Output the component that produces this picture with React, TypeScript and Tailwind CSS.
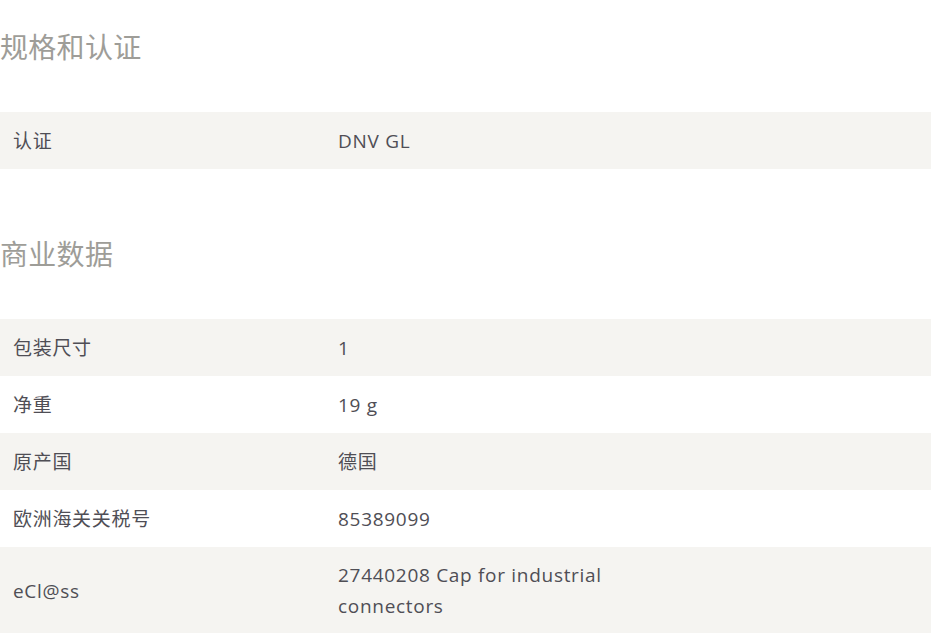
import React from "react";

interface Row {
  label: string;
  value: string;
}

const SECTIONS: { title: string; rows: Row[] }[] = [
  {
    title: "规格和认证",
    rows: [{ label: "认证", value: "DNV GL" }],
  },
  {
    title: "商业数据",
    rows: [
      { label: "包装尺寸", value: "1" },
      { label: "净重", value: "19 g" },
      { label: "原产国", value: "德国" },
      { label: "欧洲海关关税号", value: "85389099" },
      { label: "eCl@ss", value: "27440208 Cap for industrial connectors" },
    ],
  },
];

export default function App() {
  return (
    <div
      className="w-[931px] bg-white text-[#4f4e55]"
      style={{ fontFamily: '"Open Sans", "Noto Sans CJK SC", sans-serif' }}
    >
      {SECTIONS.map((section, si) => (
        <section key={section.title} className={si === 0 ? "pt-[27px]" : "pt-[65px]"}>
          <h2 className="text-[28px] leading-[40px] text-[#9e9d98] font-normal mb-[45px] tracking-[0.3px]">
            {section.title}
          </h2>
          <div className="flex flex-col">
            {section.rows.map((row, i) => (
              <div
                key={row.label}
                className={`grid grid-cols-[325px_300px_1fr] min-h-[57px] items-center text-[19px] tracking-[0.7px] leading-[31px] ${
                  i % 2 === 0 ? "bg-[#f5f4f1]" : "bg-white"
                }`}
              >
                <div className="pl-[13px] pt-[13px] pb-[11px]">{row.label}</div>
                <div className="pl-[13px] pt-[13px] pb-[11px]">{row.value}</div>
                <div />
              </div>
            ))}
          </div>
        </section>
      ))}
    </div>
  );
}
